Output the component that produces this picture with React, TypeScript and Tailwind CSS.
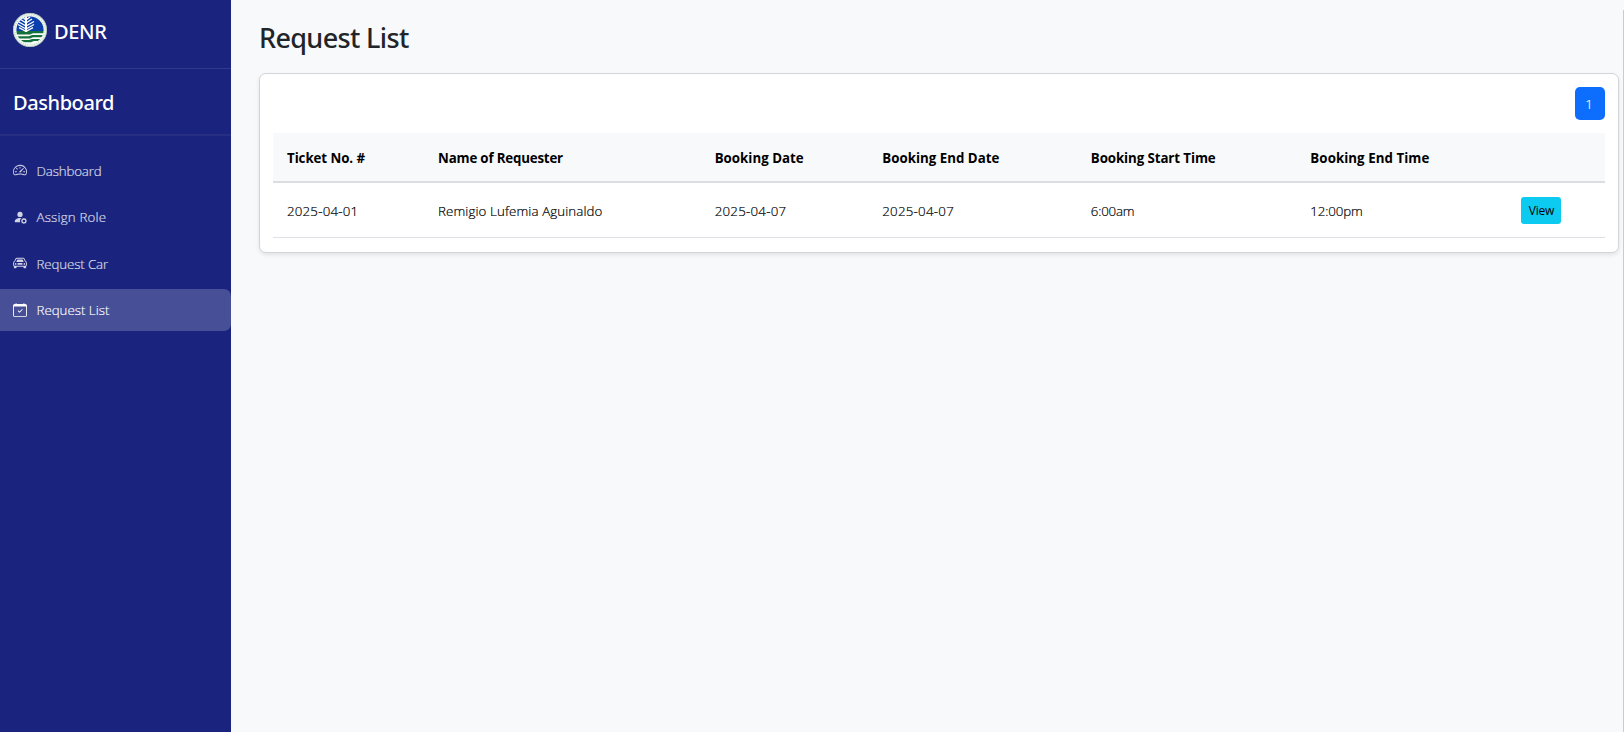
import type { IconType } from "react-icons";
import { BsSpeedometer2, BsPersonFillGear, BsCarFront, BsCalendarCheck } from "react-icons/bs";

const nav: { label: string; icon: IconType; tracking: string; active?: boolean }[] = [
  { label: "Dashboard", icon: BsSpeedometer2, tracking: "tracking-[-0.14px]" },
  { label: "Assign Role", icon: BsPersonFillGear, tracking: "tracking-[0.2px]" },
  { label: "Request Car", icon: BsCarFront, tracking: "tracking-[-0.12px]" },
  { label: "Request List", icon: BsCalendarCheck, tracking: "tracking-[0px]", active: true },
];

const columns = [
  { label: "Ticket No. #", width: "w-[151px]", tracking: "tracking-[-0.07px]" },
  { label: "Name of Requester", width: "w-[276.5px]", tracking: "tracking-[-0.18px]" },
  { label: "Booking Date", width: "w-[167.5px]", tracking: "tracking-[0.01px]" },
  { label: "Booking End Date", width: "w-[208.5px]", tracking: "tracking-[0.01px]" },
  { label: "Booking Start Time", width: "w-[219.5px]", tracking: "tracking-[-0.09px]" },
  { label: "Booking End Time", width: "w-[210.5px]", tracking: "tracking-[0.05px]" },
  { label: "", width: "w-[98px]", tracking: "" },
];

const cells = [
  { text: "2025-04-01", tracking: "tracking-[0.2px]" },
  { text: "Remigio Lufemia Aguinaldo", tracking: "tracking-[0.11px]" },
  { text: "2025-04-07", tracking: "tracking-[0.25px]" },
  { text: "2025-04-07", tracking: "tracking-[0.25px]" },
  { text: "6:00am", tracking: "tracking-[-0.2px]" },
  { text: "12:00pm", tracking: "tracking-[-0.12px]" },
];

function Seal() {
  return (
    <svg viewBox="0 0 34 34" className="size-[34px] shrink-0">
      <defs>
        <clipPath id="seal-disc"><circle cx="17" cy="17" r="13.6" /></clipPath>
      </defs>
      <circle cx="17" cy="17" r="17" fill="#f3f8f4" />
      <circle cx="17" cy="17" r="16.6" fill="none" stroke="#8db39b" strokeWidth="0.6" />
      <circle cx="17" cy="17" r="15" fill="none" stroke="#c3d8cb" strokeWidth="1.2" strokeDasharray="1 1.3" />
      <g clipPath="url(#seal-disc)">
        <rect width="34" height="18" fill="#0a3fae" />
        <rect y="18" width="34" height="16" fill="#fff" />
        <path d="M0 18H34V20.3H20L17 21.5H0ZM0 23.3H16L19 22.1H34V24.2H20L17 25.4H0ZM0 27.1H16L19 25.9H34V28H21L18 29.2H0Z" fill="#13713b" />
        <path d="M13 3V19M13 7L9 4M13 7L17 4M13 10L7 6M13 10L19 6M13 13L5 8.5M13 13L21 8.5M13 16L5 11.5M13 16L21 11.5M13 18.3L6 14.7M13 18.3L20 14.7" stroke="#fff" strokeWidth="1.3" fill="none" />
        <path d="M13 3V19" stroke="#fff" strokeWidth="2" />
      </g>
    </svg>
  );
}

export default function App() {
  return (
    <div className="flex h-[732px] w-full overflow-hidden bg-[#f8f9fb] font-['Open_Sans','Noto_Sans',sans-serif] text-[13.3px] leading-[21px] text-[#16191c]">
      <aside className="w-[231px] shrink-0 bg-[#1a237e] text-white">
        <div className="flex h-[69px] gap-[7px] border-b border-white/10 pt-[13px] pl-[13px]">
          <Seal />
          <span className="pt-[4px] font-['Noto_Sans',sans-serif] text-[20px] leading-[30px] font-medium tracking-[-0.35px]">DENR</span>
        </div>
        <div className="flex h-[67px] items-center border-b-2 border-white/[0.06] pt-[2px] pl-[13px]">
          <h2 className="font-['Noto_Sans',sans-serif] text-[20px] leading-[30px] font-medium tracking-[-0.42px]">Dashboard</h2>
        </div>
        <nav className="flex flex-col gap-[4.5px] pt-[13.4px]">
          {nav.map(({ label, icon: Icon, tracking, active }) => (
            <a
              key={label}
              className={`flex h-[42px] items-center gap-[10px] rounded-r-[7px] pl-[12.5px] font-light ${active ? "bg-white/20 text-white" : "text-white/80"}`}
            >
              <Icon className="size-[14px]" />
              <span className={`${tracking} pt-[1.5px] [-webkit-text-stroke:0.15px]`}>{label}</span>
            </a>
          ))}
        </nav>
      </aside>
      <main className="min-w-0 flex-1 pt-[20px] pr-[4px] pl-[28px]">
        <h1 className="h-[53px] font-['Noto_Sans',sans-serif] text-[27px] leading-[36px] font-medium tracking-[-0.65px] text-[#212529]">Request List</h1>
        <section className="h-[180px] rounded-[7px] border border-[#d3d6d9] bg-white px-[13px] pt-[13px] shadow-[0_2px_4px_rgba(0,0,0,0.09)]">
          <div className="flex h-[46px] justify-end">
            <button className="h-[33px] w-[30px] rounded-[5px] bg-[#0d6efd] pt-px pr-[2px] font-light text-white [-webkit-text-stroke:0.15px]">1</button>
          </div>
          <table className="w-full table-fixed border-separate border-spacing-0 text-left">
            <thead>
              <tr className="h-[50px] bg-[#f8f9fb]">
                {columns.map((c) => (
                  <th key={c.width} className={`${c.width} ${c.tracking} border-b-2 border-[#dadde1] px-[14px] pt-[2px] pb-0 font-bold whitespace-nowrap text-black`}>{c.label}</th>
                ))}
              </tr>
            </thead>
            <tbody>
              <tr className="h-[55px]">
                {cells.map((c, i) => (
                  <td key={i} className={`${c.tracking} border-b border-[#dee2e6] px-[14px] pt-[2px] pb-0 font-light whitespace-nowrap text-black [-webkit-text-stroke:0.2px]`}>{c.text}</td>
                ))}
                <td className="border-b border-[#dee2e6] px-[14px]">
                  <button className="block h-[27px] w-[40px] rounded-[3px] bg-[#0dcaf0] pl-px text-[12px] tracking-[-0.2px] text-black">View</button>
                </td>
              </tr>
            </tbody>
          </table>
        </section>
      </main>
      <div className="mt-[10px] w-px shrink-0 bg-[#cbcccd]" />
    </div>
  );
}
